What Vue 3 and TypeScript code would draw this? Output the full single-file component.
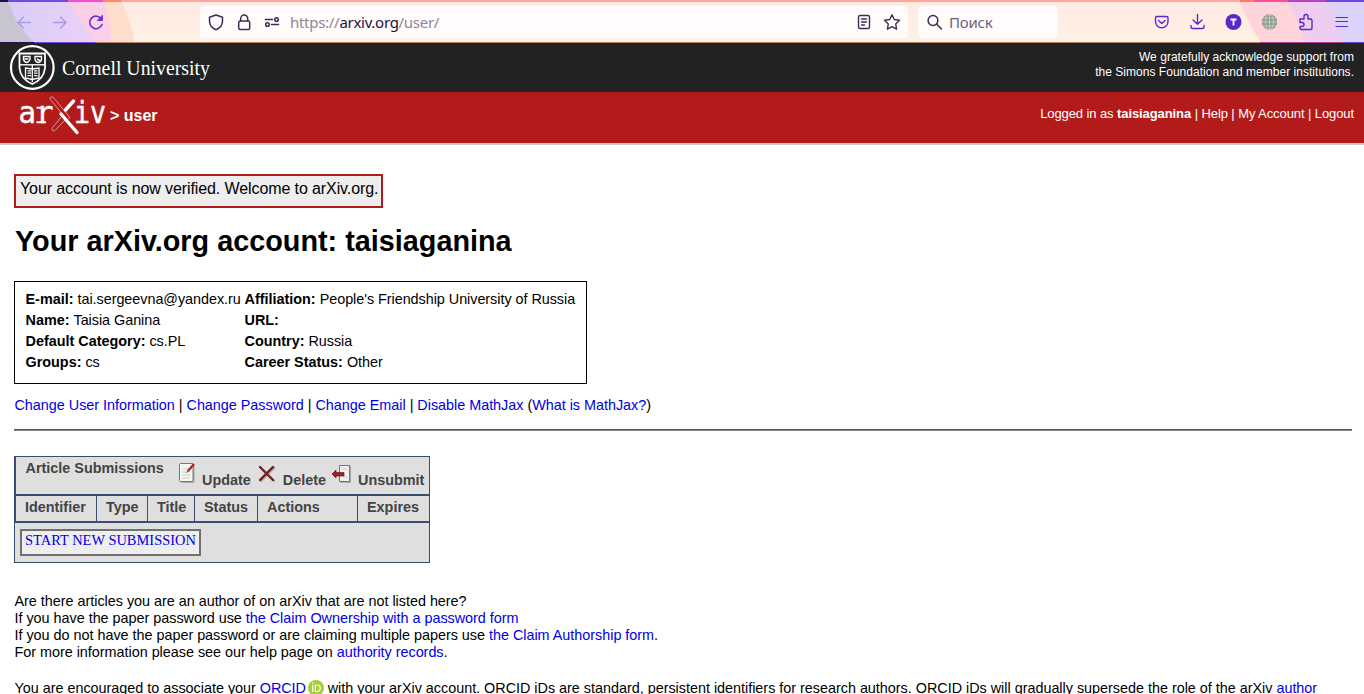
<script setup lang="ts">
interface Field { label: string; value: string }

const fields: [Field, Field][] = [
  [{ label: 'E-mail:', value: 'tai.sergeevna@yandex.ru' }, { label: 'Affiliation:', value: "People's Friendship University of Russia" }],
  [{ label: 'Name:', value: 'Taisia Ganina' }, { label: 'URL:', value: '' }],
  [{ label: 'Default Category:', value: 'cs.PL' }, { label: 'Country:', value: 'Russia' }],
  [{ label: 'Groups:', value: 'cs' }, { label: 'Career Status:', value: 'Other' }],
]
const columns: string[] = ['Identifier', 'Type', 'Title', 'Status', 'Actions', 'Expires']
</script>

<template>
  <div class="page">
    <div class="chrome">
      <svg class="theme" width="1364" height="43" viewBox="0 0 1364 43">
        <defs>
          <linearGradient id="warm" x1="0" y1="0" x2="0" y2="1">
            <stop offset="0" stop-color="#ffe9e5" /><stop offset="1" stop-color="#fff1e4" />
          </linearGradient>
          <linearGradient id="lilac" x1="0" y1="0" x2="1" y2="0">
            <stop offset="0" stop-color="#d6cdfa" /><stop offset="1" stop-color="#ecd0f6" />
          </linearGradient>
          <linearGradient id="lilac2" x1="0" y1="0" x2="1" y2="0">
            <stop offset="0" stop-color="#f2cdec" /><stop offset="1" stop-color="#e6cff4" />
          </linearGradient>
        </defs>
        <rect width="1364" height="43" fill="url(#warm)" />
        <path d="M0 2H121Q132 22 134 43H0Z" fill="#ffdccb" />
        <path d="M0 2H104Q111 22 111 43H0Z" fill="#ffd0d8" />
        <path d="M0 2H69L96 43H0Z" fill="url(#lilac)" />
        <path d="M69 2H104Q111 22 111 43H96Q88 24 69 2Z" fill="#fbcfe8" />
        <path d="M0 2H8Q18 28 34 43H0Z" fill="#c8c4d0" />
        <path d="M1240 2H1364V43H1262Q1248 24 1240 2Z" fill="#ffd7d0" />
        <path d="M1287 2H1364V43H1304Q1300 22 1287 2Z" fill="url(#lilac2)" />
        <path d="M1240 2H1287Q1298 22 1304 43H1262Q1248 24 1240 2Z" fill="#ffd4da" />
        <path d="M1327 2H1364V43H1343Q1338 20 1327 2Z" fill="#dcd3fc" />
        <rect width="1364" height="2" fill="#ffa79c" />
        <rect width="8" height="2" fill="#211044" /><rect x="8" width="60" height="2" fill="#724be0" />
        <rect x="68" width="35" height="2" fill="#f64bd4" /><rect x="103" width="18" height="2" fill="#ff8866" />
        <rect x="1240" width="14" height="2" fill="#ff796d" /><rect x="1254" width="34" height="2" fill="#ff4f92" />
        <rect x="1288" width="38" height="2" fill="#b844c4" /><rect x="1326" width="38" height="2" fill="#7148df" />
        <rect y="42" width="1364" height="1" fill="#b18468" />
        <rect y="42" width="34" height="1" fill="#211044" /><rect x="34" y="42" width="62" height="1" fill="#7148df" />
        <rect x="1260" y="42" width="83" height="1" fill="#b43f91" /><rect x="1343" y="42" width="21" height="1" fill="#6540cf" />
      </svg>
      <div class="toolbar">
        <svg class="nav" width="200" height="40" viewBox="0 0 200 40" fill="none" stroke-linecap="round" stroke-linejoin="round">
          <path d="M30.500 20.500H18M23.500 15L18 20.500L23.500 26M53.500 20.500H66M60.500 15L66 20.500L60.500 26" stroke="#ac96e8" stroke-width="1.300" />
          <path d="M101.500 17.200A6.300 6.300 0 1 0 102 22.500" stroke="#592acb" stroke-width="1.500" />
          <path d="M102.500 13.500V18.500H97.500Z" fill="#592acb" stroke="#592acb" stroke-width=".7" />
        </svg>
        <div class="url">
          <svg width="84" height="32" viewBox="0 0 84 32" fill="none" stroke="#3c2e58" stroke-width="1.500" stroke-linecap="round" stroke-linejoin="round">
            <path d="M16 9L22.500 11.300V15C22.500 19.500 19.800 22.100 16 23.700C12.200 22.100 9.500 19.500 9.500 15V11.300Z" />
            <rect x="38.700" y="15" width="11" height="8.500" rx="1.500" /><path d="M40.700 15V12.500A3.500 3.500 0 0 1 47.700 12.500V15" />
            <path d="M65.500 13.500H72.500M71.500 18.500H78.500" /><circle cx="76.500" cy="13.500" r="1.800" /><circle cx="67.500" cy="18.500" r="1.800" />
          </svg>
          <span class="address">https://<b>arxiv.org</b>/user/</span>
          <svg class="tail" width="60" height="32" viewBox="0 0 60 32" fill="none" stroke="#3c2e58" stroke-width="1.400" stroke-linecap="round" stroke-linejoin="round">
            <rect x="10.500" y="9.500" width="11" height="13" rx="1.500" /><path d="M13.500 13H18.500M13.500 16H18.500M13.500 19H16.500" />
            <path d="M44 8.800L46.300 13.500L51.500 14.300L47.700 18L48.600 23.200L44 20.700L39.400 23.200L40.300 18L36.500 14.300L41.700 13.500Z" />
          </svg>
        </div>
        <div class="search">
          <svg width="32" height="32" viewBox="0 0 32 32" fill="none" stroke="#3c2e58" stroke-width="1.500" stroke-linecap="round"><circle cx="15" cy="14.500" r="4.900" /><path d="M18.700 18.200L23.500 23" /></svg>
          <span>Поиск</span>
        </div>
        <svg class="tools" width="224" height="40" viewBox="1140 2 224 40" fill="none" stroke="#592acb" stroke-width="1.400" stroke-linecap="round" stroke-linejoin="round">
          <path d="M1157 16.500H1166.500Q1168 16.500 1168 18V21.500A6 6 0 0 1 1155.500 21.500V18Q1155.500 16.500 1157 16.500ZM1158.500 20.500L1161.800 23.500L1165 20.500" />
          <path d="M1197.500 14.500V24M1193 20L1197.500 24.300L1202 20M1191 25.500V27Q1191 28.500 1192.500 28.500H1202.500Q1204 28.500 1204 27V25.500" />
          <circle cx="1233.500" cy="22" r="8" fill="#592acb" stroke="none" />
          <path d="M1230.500 19.500H1236.500M1233.500 19.500V25.500" stroke="#fff" stroke-width="1.800" stroke-linecap="butt" />
          <circle cx="1269.500" cy="22" r="7.700" fill="#929b91" stroke="none" />
          <g stroke="#ccd1c7" stroke-width=".8"><path d="M1262 22H1277M1263.500 18H1275.500M1263.500 26H1275.500M1269.500 14V30" /><ellipse cx="1269.500" cy="22" rx="4" ry="7.500" /></g>
          <path d="M1300 19H1304V16.500A2 2 0 0 1 1308 16.500V19H1310.500Q1312 19 1312 20.500V28Q1312 29.500 1310.500 29.500H1301.500Q1300 29.500 1300 28V26.500H1302A2 2 0 0 0 1302 22.500H1300Z" />
          <path d="M1336 17.500H1347.500M1336 21.500H1347.500M1336 26.500H1347.500" stroke-width="1.200" />
        </svg>
      </div>
    </div>

    <header class="cornell">
      <svg width="230" height="49" viewBox="0 43 230 49">
        <g fill="none" stroke="#fff">
          <circle cx="32.300" cy="67.500" r="21.300" stroke-width="2.200" />
          <path d="M19.500 53.500H45V68Q44 79 32.300 84Q20.500 79 19.500 68Z" stroke-width="1.800" />
          <path d="M20 64.800H45" stroke-width="1.400" />
          <path d="M23.500 56.500H30V59.500Q29 62 26.700 62.500Q24 62 23.500 59.500ZM35 56.500H41.500V59.500Q41 62 38.300 62.500Q35.500 62 35 59.500ZM24.500 59H28.500M37 59L40 60.500" stroke-width="1.400" />
          <path d="M25.500 68L32.300 69L39 68V78L32.300 79.500L25.500 78ZM32.300 65V82M27.500 70.800H31M27.500 73.200H31M27.500 75.600H31M34 70.800H37.500M34 73.200H37.500M34 75.600H37.500" stroke-width="1.300" />
        </g>
        <text x="62" y="75" textLength="148" lengthAdjust="spacingAndGlyphs" class="cu">Cornell University</text>
      </svg>
      <div class="support">We gratefully acknowledge support from<br>the Simons Foundation and member institutions.</div>
    </header>

    <div class="banner">
      <div class="brand">
        <svg width="108" height="51" viewBox="0 92 108 51">
          <g class="arxiv"><text x="18.500" y="123" textLength="35" lengthAdjust="spacingAndGlyphs">ar</text><text x="74" y="123" textLength="32" lengthAdjust="spacingAndGlyphs">iv</text></g>
          <path d="M36.500 122.300H46M36.500 107.800H41" stroke="#fff" stroke-width="2" />
          <path d="M50 99Q50 95.500 53.500 97.500L70 117.500L67 120L50 99ZM61.500 116.500L52.200 128Q51.500 132 55 130.500L65 120" fill="none" stroke="#e5b0b0" stroke-width=".8" />
          <path d="M73.500 101L65.500 110M61 114L77 132.500" fill="none" stroke="#fff" stroke-width="3.400" stroke-linecap="round" />
        </svg>
        <span>&gt; user</span>
      </div>
      <div class="login">Logged in as <b>taisiaganina</b> | Help | My Account | Logout</div>
    </div>

    <main>
      <div class="notice">Your account is now verified. Welcome to arXiv.org.</div>
      <h1>Your arXiv.org account: taisiaganina</h1>
      <div class="profile">
        <template v-for="(row, i) in fields" :key="i">
          <div v-for="f in row" :key="f.label"><b>{{ f.label }}</b> <span>{{ f.value }}</span></div>
        </template>
      </div>
      <p class="links"><a>Change User Information</a> | <a>Change Password</a> | <a>Change Email</a> | <a>Disable MathJax</a> (<a>What is MathJax?</a>)</p>
      <div class="rule"></div>

      <section class="articles">
        <div class="caption">
          <span class="title">Article Submissions</span>
          <svg class="i1" width="20" height="24" viewBox="0 0 20 24">
            <rect x="2.500" y="4" width="14" height="18" rx="1" fill="#aaa" /><rect x="1.500" y="2.500" width="13.500" height="18" rx="1" fill="#f5f5f4" stroke="#777" />
            <path d="M4 8H10M4 11H12M4 14H12M4 17H12" stroke="#ccc" /><path d="M10 10L16 3" stroke="#b61d1d" stroke-width="2.300" /><path d="M8.500 11.500L10.500 9.500" stroke="#333" />
          </svg>
          <span class="action">Update</span>
          <svg class="i2" width="20" height="20" viewBox="0 0 20 20" fill="none" stroke-linecap="round"><path d="M4 4L17 17M17 4L4 17" stroke="#aaa" stroke-width="2.400" /><path d="M3 3L16 16M16 3L3 16" stroke="#672022" stroke-width="2.400" /><path d="M4 3.500L15 15" stroke="#ac2024" stroke-width="1" /></svg>
          <span class="action">Delete</span>
          <svg class="i3" width="20" height="20" viewBox="0 0 20 20"><path d="M8 2H19V19H8Z" fill="#aaa" /><path d="M7.500 1.500H17.500V17.500H7.500Z" fill="#efefed" stroke="#777" /><path d="M10 5H15M11 13H15" stroke="#ccc" /><path d="M0 10L4 6V8.500H12V12H4V14Z" fill="#a91b20" stroke="#641d20" stroke-width=".7" /></svg>
          <span class="action">Unsubmit</span>
        </div>
        <div class="heads"><div v-for="c in columns" :key="c">{{ c }}</div></div>
        <div class="start"><span class="button">START NEW SUBMISSION</span></div>
      </section>

      <p class="claims">Are there articles you are an author of on arXiv that are not listed here?<br>
        If you have the paper password use <a>the Claim Ownership with a password form</a><br>
        If you do not have the paper password or are claiming multiple papers use <a>the Claim Authorship form</a>.<br>
        For more information please see our help page on <a>authority records</a>.</p>
      <p class="orcid">You are encouraged to associate your <a>ORCID</a>
        <svg width="16" height="16" viewBox="0 0 16 16"><circle cx="8" cy="8" r="8" fill="#a6ce39" /><path d="M4.700 5V12M7.300 5V11.500H9.200Q12.300 11.300 12.300 8.200Q12.200 5 9.200 5Z" fill="none" stroke="#fff" stroke-width="1.200" /><circle cx="4.700" cy="3.100" r=".8" fill="#fff" /></svg>
        with your arXiv account. ORCID iDs are standard, persistent identifiers for research authors. ORCID iDs will gradually supersede the role of the arXiv <a>author</a></p>
    </main>
  </div>
</template>

<style>
html, body { margin: 0; overflow: hidden; background: #fff; }
</style>

<style scoped>
.page { width: 1364px; height: 694px; overflow: hidden; font: 14.4px/17px "Liberation Sans", Arial, sans-serif; color: #000; }
svg { display: block; flex: none; }
a { color: #0000e6; }
.chrome { position: relative; height: 43px; }
.theme { position: absolute; inset: 0; }
.toolbar { position: relative; display: flex; height: 40px; padding-top: 2px; }
.url, .search { height: 32px; margin-top: 4px; display: flex; align-items: center; background: #fffcfb; border-radius: 4px; }
.url { width: 708px; }
.address, .search span { font: 15px/32px "Noto Sans", sans-serif; color: #8e849b; white-space: nowrap; }
.address { margin-left: 6px; letter-spacing: -.29px; }
.address b { font-weight: 400; color: #20113d; }
.tail { margin-left: auto; }
.search { width: 140px; margin-left: 10px; }
.search span { color: #6d617b; margin-left: -1px; letter-spacing: -.2px; }
.tools { margin-left: auto; }
.cornell { height: 49px; background: #222; color: #fff; display: flex; justify-content: space-between; }
.cu { font: 20px "Liberation Serif", serif; fill: #fff; }
.support { padding: 7px 10px 0 0; font-size: 12px; line-height: 15px; letter-spacing: .03px; text-align: right; white-space: nowrap; }
.banner { height: 51px; background: #b31b1b; color: #fff; border-bottom: 2px solid #d0cccc; display: flex; justify-content: space-between; }
.brand { display: flex; font-weight: 700; font-size: 16px; line-height: 48px; }
.brand span { margin-left: 2px; }
.arxiv { font: 30px "DejaVu Sans Mono", monospace; fill: #fff; stroke: #fff; stroke-width: .4px; }
.login { font-size: 13px; line-height: 44px; padding-right: 10px; letter-spacing: -.09px; white-space: nowrap; }
main { padding: 29px 12px 0 14px; }
.notice { box-sizing: border-box; width: 369px; height: 34px; border: 2px solid #b31b1b; background: #eee; padding: 3px 0 0 4px; font-size: 16px; line-height: 19px; letter-spacing: -.1px; white-space: nowrap; }
h1 { margin: 16px 0 0 1px; font-size: 28.8px; line-height: 34px; white-space: nowrap; }
.profile { box-sizing: border-box; width: 573px; height: 103px; margin-top: 23px; border: 1px solid #000; padding: 7px 10.500px; display: grid; grid-template-columns: 219px 1fr; grid-auto-rows: 21px; line-height: 21px; white-space: nowrap; align-content: start; }
.profile span { letter-spacing: -.04px; }
.links { margin: 13px 0 0 .5px; letter-spacing: -.02px; white-space: nowrap; }
.rule { margin-top: 15px; height: 2px; background: linear-gradient(#555 50%, #888 50%); }
.articles { box-sizing: border-box; width: 416px; height: 107px; margin-top: 25px; border: 1px solid #3a4d70; background: #dfdfdf; color: #444; font-weight: 700; }
.caption { box-sizing: border-box; height: 37px; display: flex; border-left: 1px solid #3a4d70; white-space: nowrap; }
.title { width: 152px; padding: 3px 0 0 9.500px; box-sizing: border-box; }
.action { padding-top: 15px; }
.i1 { margin: 4px 4px 0 10px; }
.i2 { margin: 7px 6px 0; }
.i3 { margin: 7px 6px 0; }
.heads { display: grid; grid-template-columns: 81px 51px 47px 63px 100px 1fr; height: 25px; border: solid #3a4d70; border-width: 2px 0 2px 1px; }
.heads div { padding: 3px 0 0 9px; border-right: 1px solid #3a4d70; }
.heads div:last-child { border: 0; }
.start { padding: 6px 5px; }
.button { display: block; box-sizing: border-box; width: 181px; height: 27px; border: 2px solid #707070; background: #eee; padding: 1px 3px; color: #0000e6; font: 400 14.400px/17px "Liberation Serif", serif; letter-spacing: .04px; white-space: nowrap; }
.claims { margin: 30px 0 0 .5px; letter-spacing: -.02px; white-space: nowrap; }
.orcid { margin: 19px 0 0 .5px; letter-spacing: -.015px; white-space: nowrap; }
.orcid svg { display: inline-block; vertical-align: -3px; margin: 0 0 0 -1px; position: relative; }
.orcid a:first-child { margin-right: 3px; letter-spacing: -.1px; }
</style>
